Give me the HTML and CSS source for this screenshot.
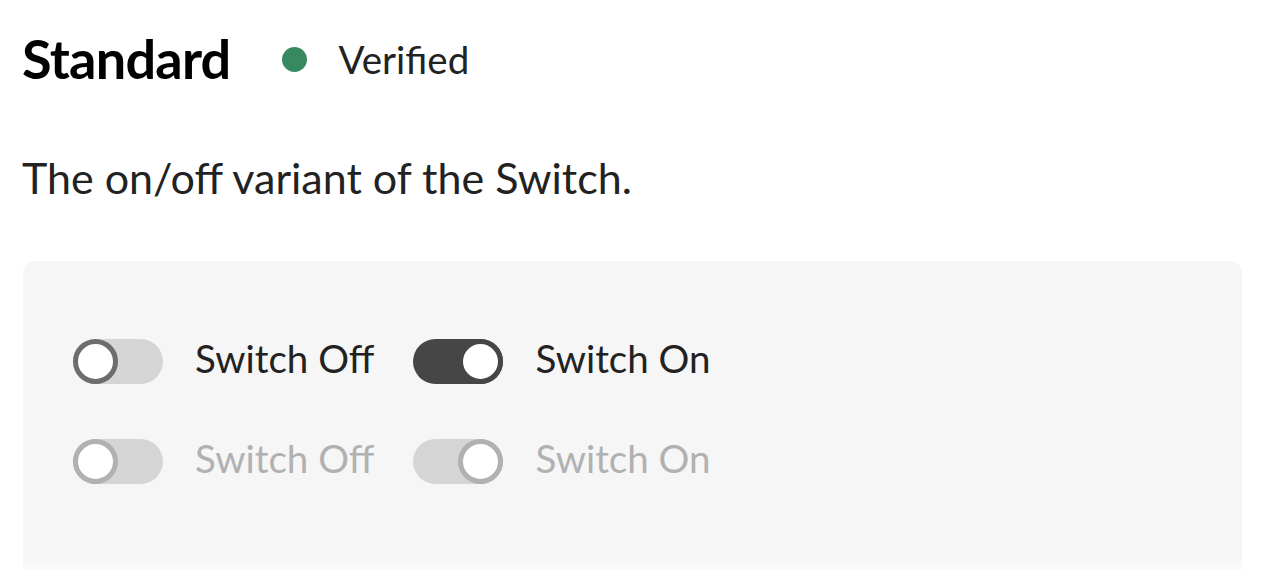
FILE: index.html
```html
<!DOCTYPE html>
<html lang="en">
<head>
<meta charset="utf-8">
<title>Switch – Standard</title>
<link rel="stylesheet" href="styles.css">
</head>
<body>
<main class="page">
  <header class="title-row">
    <h2 class="title">Standard</h2>
    <span class="status"><span class="status-dot"></span><span class="status-text">Verified</span></span>
  </header>
  <p class="desc">The on/off variant of the Switch.</p>
  <section class="example">
    <div class="row">
      <label class="switch">
        <span class="track"><span class="knob"></span></span>
        <span class="label">Switch Off</span>
      </label>
      <label class="switch is-on">
        <span class="track"><span class="knob"></span></span>
        <span class="label">Switch On</span>
      </label>
    </div>
    <div class="row">
      <label class="switch is-disabled">
        <span class="track"><span class="knob"></span></span>
        <span class="label">Switch Off</span>
      </label>
      <label class="switch is-on is-disabled">
        <span class="track"><span class="knob"></span></span>
        <span class="label">Switch On</span>
      </label>
    </div>
  </section>
  <div class="code"></div>
</main>
</body>
</html>
```

FILE: styles.css
```css
* { box-sizing: border-box; }
html, body { margin: 0; padding: 0; background: #fff; }
body {
  font-family: Lato, "Open Sans", sans-serif;
  color: #222;
  overflow: hidden;
}
.page {
  width: 1219px;
  margin-left: 23px;
}
.title-row {
  height: 118px;
  display: flex;
  align-items: center;
  margin-left: -1px;
}
.title {
  margin: 0;
  font-size: 54px;
  font-weight: 700;
  color: #000;
  line-height: 1.2;
  letter-spacing: -0.75px;
}
.status {
  display: flex;
  align-items: center;
  margin-left: 51px;
}
.status-dot {
  width: 25px;
  height: 25px;
  border-radius: 50%;
  background: #378a5f;
}
.status-text {
  margin-left: 32px;
  font-size: 38.5px;
  line-height: 1.2;
  color: #222;
}
.desc {
  margin: 34px 0 0 -1px;
  font-size: 43px;
  line-height: 52px;
  color: #222;
}
.example {
  margin-top: 57px;
  background: #f6f6f6;
  border-radius: 12px 12px 0 0;
  padding: 78px 50px 79px;
  display: flex;
  flex-direction: column;
  gap: 55px;
}
.row {
  display: flex;
  align-items: center;
  gap: 39px;
}
.switch {
  display: flex;
  align-items: center;
  gap: 32px;
  height: 45px;
}
.track {
  position: relative;
  width: 90px;
  height: 45px;
  border-radius: 22.5px;
  background: #d5d5d5;
  flex: none;
}
.knob {
  position: absolute;
  top: 0;
  left: 0;
  width: 45px;
  height: 45px;
  border-radius: 50%;
  background: #fff;
  border: 5px solid #6d6d6d;
}
.is-on .track { background: #464646; }
.is-on .knob { left: 45px; border-color: #464646; }
.is-disabled .track { background: #d5d5d5; }
.is-disabled .knob { border-color: #b1b1b1; }
.label {
  font-size: 38.5px;
  line-height: 45px;
  height: 45px;
  margin-bottom: 7px;
  color: #222;
  white-space: nowrap;
}
.is-disabled .label { color: #b1b1b1; }
.code {
  height: 20px;
  background: #fafafa;
}
```
